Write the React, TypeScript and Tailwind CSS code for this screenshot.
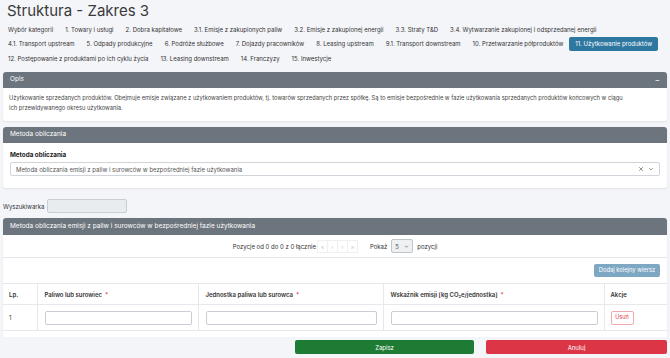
import React from "react";

const rows: string[][] = [
  [
    "Wybór kategorii",
    "1. Towary i usługi",
    "2. Dobra kapitałowe",
    "3.1. Emisje z zakupionych paliw",
    "3.2. Emisje z zakupionej energii",
    "3.3. Straty T&D",
    "3.4. Wytwarzanie zakupionej i odsprzedanej energii",
  ],
  [
    "4.1. Transport upstream",
    "5. Odpady produkcyjne",
    "6. Podróże służbowe",
    "7. Dojazdy pracowników",
    "8. Leasing upstream",
    "9.1. Transport downstream",
    "10. Przetwarzanie półproduktów",
    "11. Użytkowanie produktów",
  ],
  [
    "12. Postępowanie z produktami po ich cyklu życia",
    "13. Leasing downstream",
    "14. Franczyzy",
    "15. Inwestycje",
  ],
];

const ACTIVE = "11. Użytkowanie produktów";

function PanelHeader({ title, extra }: { title: string; extra?: React.ReactNode }) {
  return (
    <div className="flex h-[16px] items-center justify-between bg-[#6c757d] px-[7px] text-[6.5px] text-white">
      <span>{title}</span>
      {extra}
    </div>
  );
}

function Req() {
  return <span className="ml-[3px] text-[#dc3545]">*</span>;
}

export default function App() {
  return (
    <div
      className="relative h-[358px] w-[670px] overflow-hidden bg-[#f4f5f9] text-[#333]"
      style={{ fontFamily: "Inter, 'Noto Sans', sans-serif" }}
    >
      {/* title */}
      <div className="flex h-[22px] items-center px-[7px] text-[15px] font-normal text-[#3a3a3a]">Struktura - Zakres 3</div>

      {/* category tabs */}
      <div className="flex flex-col pl-[2px] text-[6px]">
        {rows.map((row, i) => (
          <div key={i} className="flex h-[14.5px] items-center whitespace-nowrap">
            {row.map((t) => (
              <div
                key={t}
                className={
                  t === ACTIVE
                    ? "flex h-[14px] shrink-0 items-center rounded-[2px] bg-[#2e77a1] px-[6px] text-white"
                    : "flex h-[14px] shrink-0 items-center px-[6px] text-[#333]"
                }
              >
                {t}
              </div>
            ))}
          </div>
        ))}
      </div>

      <div className="mx-[3px] mt-[6.5px] flex flex-col">
        {/* Opis */}
        <div className="overflow-hidden rounded-[3px] bg-white shadow-[0_1px_2px_rgba(0,0,0,0.08)]">
          <PanelHeader title="Opis" extra={<span className="text-[8px] leading-none">−</span>} />
          <div className="h-[33px] pl-[6px] pr-[2px] pt-[5px] text-[5.75px] leading-[10px] text-[#444]">
            <span className="whitespace-nowrap">
              Użytkowanie sprzedanych produktów. Obejmuje emisje związane z użytkowaniem produktów, tj. towarów sprzedanych przez spółkę. Są to emisje bezpośrednie w fazie użytkowania sprzedanych produktów końcowych w ciągu
            </span>
            <br />
            ich przewidywanego okresu użytkowania.
          </div>
        </div>

        {/* Metoda obliczania */}
        <div className="mt-[6px] overflow-hidden rounded-[3px] bg-white shadow-[0_1px_2px_rgba(0,0,0,0.08)]">
          <PanelHeader title="Metoda obliczania" />
          <div className="h-[45px] px-[7px] pt-[7px]">
            <div className="h-[10px] text-[6.3px] font-bold leading-[10px] text-[#222]">Metoda obliczania</div>
            <div className="mt-[2px] flex h-[14px] items-center justify-between rounded-[2px] border border-[#cfd4da] pl-[5px] pr-[5px] text-[6px] text-[#555]">
              <span>Metoda obliczania emisji z paliw i surowców w bezpośredniej fazie użytkowania</span>
              <span className="flex items-center gap-[4px] text-[#666]">
                <svg width="6" height="6" viewBox="0 0 10 10" fill="none" stroke="#777" strokeWidth="1.3">
                  <path d="M2 2l6 6M8 2l-6 6" />
                </svg>
                <svg width="6" height="6" viewBox="0 0 10 10" fill="none" stroke="#777" strokeWidth="1.3">
                  <path d="M2 3.5l3 3 3-3" />
                </svg>
              </span>
            </div>
          </div>
        </div>

        {/* search */}
        <div className="mt-[11px] flex h-[14px] items-center">
          <span className="w-[44px] text-[6px] text-[#333]">Wyszukiwarka</span>
          <div className="h-[14px] w-[80px] rounded-[2px] border border-[#c9ced4] bg-[#e9ecef]" />
        </div>

        {/* table panel */}
        <div className="mt-[5px] overflow-hidden rounded-[3px] bg-white shadow-[0_1px_2px_rgba(0,0,0,0.08)]">
          <div className="flex h-[17px] items-center bg-[#6c757d] px-[7px] text-[6.5px] text-white">
            Metoda obliczania emisji z paliw i surowców w bezpośredniej fazie użytkowania
          </div>
          <div className="flex h-[23px] items-center justify-center border-b border-[#e6e8eb] text-[6px] text-[#333]">
            <span className="mr-[2px]">Pozycje od 0 do 0 z 0 łącznie</span>
            <div className="flex">
              {["«", "‹", "›", "»"].map((g) => (
                <span
                  key={g}
                  className="-ml-px flex h-[13px] w-[11px] items-center justify-center border border-[#eef0f2] text-[6px] text-[#ccc]"
                >
                  {g}
                </span>
              ))}
            </div>
            <span className="ml-[12px] mr-[4px]">Pokaż</span>
            <div className="flex h-[14px] w-[22px] items-center justify-between rounded-[2px] border border-[#bfc5cc] bg-[#eef0f2] px-[3px] text-[#555]">
              <span>5</span>
              <svg width="5" height="5" viewBox="0 0 10 10" fill="none" stroke="#666" strokeWidth="1.4">
                <path d="M2 3.5l3 3 3-3" />
              </svg>
            </div>
            <span className="ml-[4px]">pozycji</span>
          </div>
          <div className="flex h-[25px] items-center justify-end pr-[7px]">
            <div className="flex h-[13px] w-[66px] items-center justify-center rounded-[2px] bg-[#7ea7c3] text-[5.8px] text-white">
              Dodaj kolejny wiersz
            </div>
          </div>
          <table className="w-full border-collapse text-[6px] text-[#333]">
            <thead>
              <tr className="h-[21px] border-y border-[#e6e8eb]">
                <th className="w-[34px] border-r border-[#e6e8eb] pl-[6px] text-left font-semibold">Lp.</th>
                <th className="w-[161px] border-r border-[#e6e8eb] pl-[7px] text-left font-semibold">
                  Paliwo lub surowiec
                  <Req />
                </th>
                <th className="w-[185px] border-r border-[#e6e8eb] pl-[7px] text-left font-semibold">
                  Jednostka paliwa lub surowca
                  <Req />
                </th>
                <th className="w-[221px] border-r border-[#e6e8eb] pl-[7px] text-left font-semibold">
                  Wskaźnik emisji [kg CO<sub className="text-[4px]">2</sub>e/jednostka]
                  <Req />
                </th>
                <th className="pl-[6px] text-left font-semibold">Akcje</th>
              </tr>
            </thead>
            <tbody>
              <tr className="h-[26px] border-b border-[#e6e8eb]">
                <td className="border-r border-[#e6e8eb] pl-[6px]">1</td>
                <td className="border-r border-[#e6e8eb] px-[6px] pl-[7px]">
                  <div className="h-[14px] rounded-[2px] border border-[#c9ced6]" />
                </td>
                <td className="border-r border-[#e6e8eb] px-[6px] pl-[7px]">
                  <div className="h-[14px] rounded-[2px] border border-[#c9ced6]" />
                </td>
                <td className="border-r border-[#e6e8eb] px-[6px] pl-[7px]">
                  <div className="h-[14px] rounded-[2px] border border-[#c9ced6]" />
                </td>
                <td className="pl-[6px]">
                  <div className="flex h-[14px] w-[23px] items-center justify-center rounded-[2px] border border-[#f0a7ae] text-[5.5px] text-[#dc3545]">
                    Usuń
                  </div>
                </td>
              </tr>
            </tbody>
          </table>
          <div className="flex h-[25px] items-center justify-end pr-[7px] pt-[6px]">
            <div className="flex h-[13px] w-[66px] items-center justify-center rounded-[2px] bg-[#7ea7c3] text-[5.8px] text-white">
              Dodaj kolejny wiersz
            </div>
          </div>
        </div>
      </div>

      {/* sticky footer */}
      <div className="absolute bottom-0 left-0 flex h-[21px] w-full items-start justify-end gap-[12px] bg-[#f4f5f9] pr-[3px] pt-[3px]">
        <div className="flex h-[14px] w-[179px] items-center justify-center rounded-[2px] bg-[#1e7b34] text-[6px] text-white">
          Zapisz
        </div>
        <div className="flex h-[14px] w-[181px] items-center justify-center rounded-[2px] bg-[#dc3545] text-[6px] text-white">
          Anuluj
        </div>
      </div>
    </div>
  );
}
